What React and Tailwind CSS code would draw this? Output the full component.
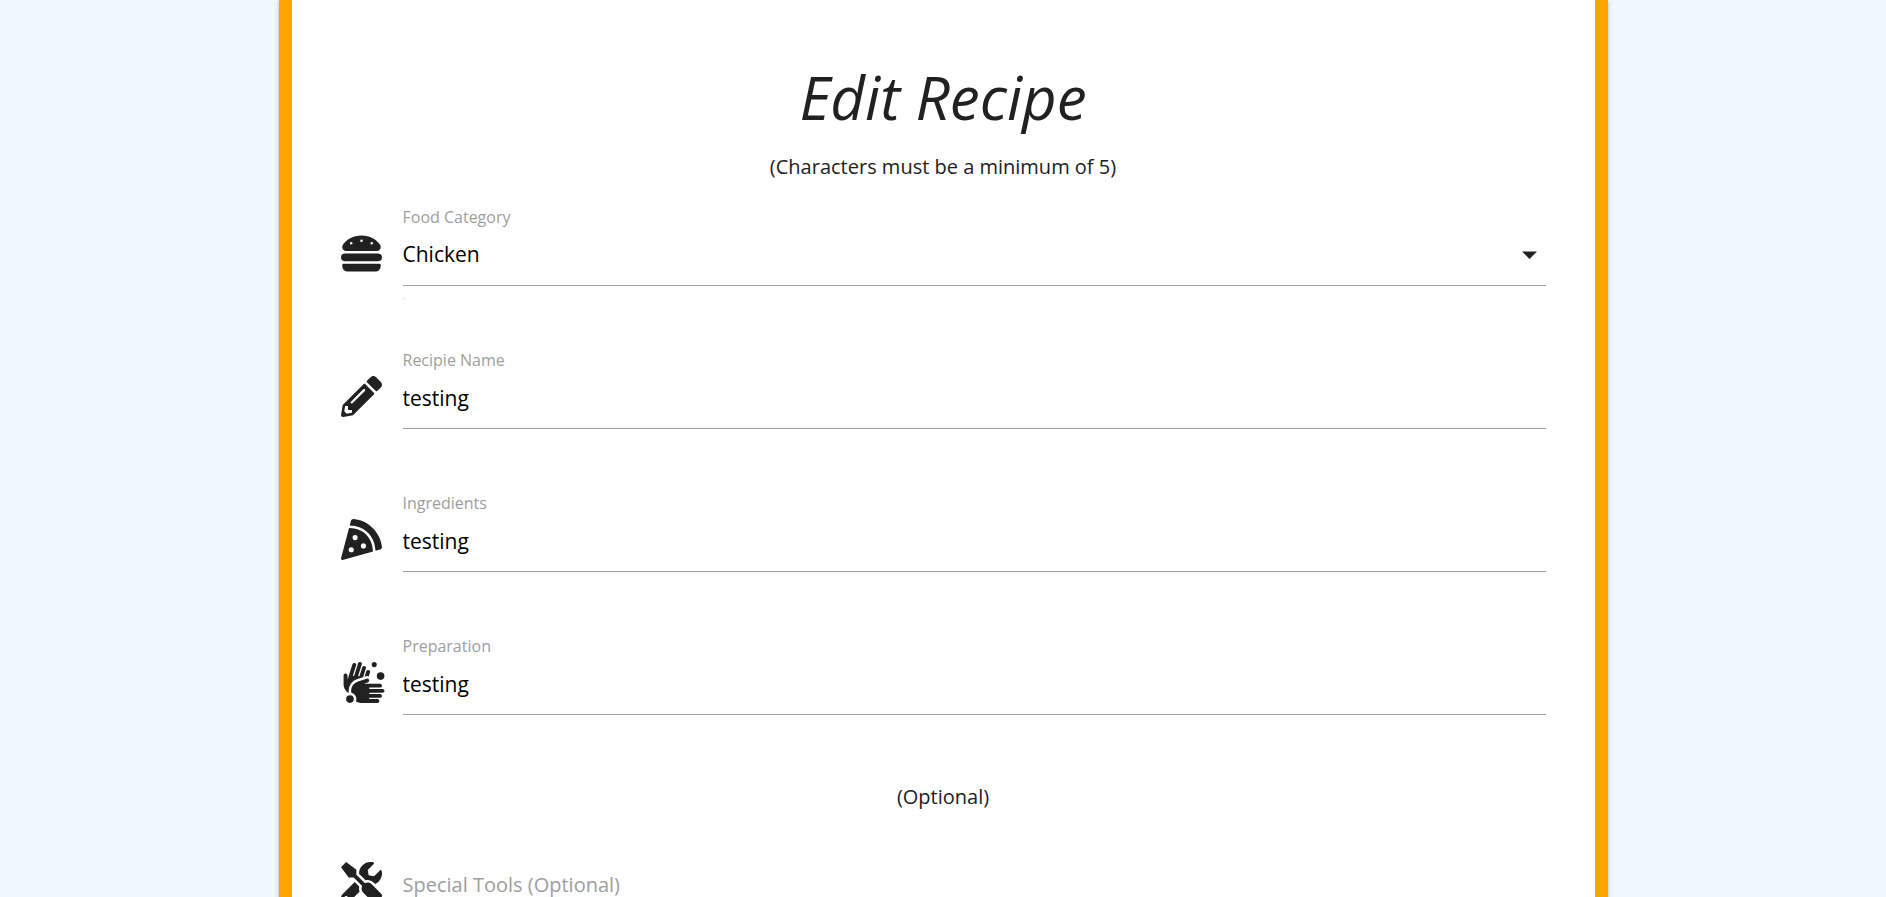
import { FaHamburger, FaPencilAlt, FaPizzaSlice, FaHandsWash, FaTools } from "react-icons/fa";

const controlClass =
  "block h-[58px] w-full appearance-none rounded-none border-b border-[#9e9e9e] bg-transparent pb-[3px] text-black outline-none placeholder:text-[#9e9e9e] placeholder:opacity-100 focus:border-[#26a69a]";

function Field({ icon, id, label, children }) {
  return (
    <div className="mb-[63px] flex items-start">
      <div className="mt-[27px] w-[62px] shrink-0" aria-hidden="true">
        {icon}
      </div>
      <div className="min-w-0 grow">
        <label htmlFor={id} className="block h-[22px] text-[16px] leading-[22px] text-[#9e9e9e]">
          {label}
        </label>
        {children}
      </div>
    </div>
  );
}

export default function App() {
  return (
    <div className="h-screen overflow-hidden bg-[#f0f8ff] font-['Open_Sans',sans-serif] text-[#212121]">
      <main className="mx-auto min-h-full w-full max-w-[1329px] border-x-[13px] border-[orange] bg-white px-[49px] pt-[67px] shadow-[0_2px_2px_0_rgba(0,0,0,0.14),0_3px_1px_-2px_rgba(0,0,0,0.12),0_1px_5px_0_rgba(0,0,0,0.2)]">
        <h1 className="text-center text-[60px] leading-[60px] italic">Edit Recipe</h1>
        <p className="mt-[26px] text-center text-[20px] leading-7">(Characters must be a minimum of 5)</p>

        <form className="mt-[25px]">
          <Field icon={<FaHamburger className="h-[41px] w-[41px]" />} id="category" label="Food Category">
            <div className="relative">
              <select id="category" defaultValue="Chicken" className={`${controlClass} text-[21px]`}>
                <option>Chicken</option>
                <option>Beef</option>
                <option>Seafood</option>
                <option>Vegetarian</option>
              </select>
              <svg className="pointer-events-none absolute top-[23px] right-[9px] h-2 w-[15px]" viewBox="0 0 15 8" aria-hidden="true">
                <path d="M0 .5h15L7.500 8z" fill="#212121" />
              </svg>
              <span className="absolute top-[69px] left-0 size-[3px] rounded-[1px] bg-[#f3f3f3]" />
            </div>
          </Field>
          <Field icon={<FaPencilAlt className="h-[41px] w-[41px]" />} id="name" label="Recipie Name">
            <input id="name" type="text" defaultValue="testing" className={`${controlClass} text-[21px]`} />
          </Field>
          <Field icon={<FaPizzaSlice className="h-[41px] w-[41px]" />} id="ingredients" label="Ingredients">
            <input id="ingredients" type="text" defaultValue="testing" className={`${controlClass} text-[21px]`} />
          </Field>
          <Field icon={<FaHandsWash className="h-[41px] w-[46px]" />} id="preparation" label="Preparation">
            <input id="preparation" type="text" defaultValue="testing" className={`${controlClass} text-[21px]`} />
          </Field>
          <p className="-mt-[58px] pt-[63px] text-center text-[20px] leading-7">(Optional)</p>
          <div className="mt-6">
            <Field icon={<FaTools className="h-[41px] w-[41px]" />} id="tools" label="">
              <input id="tools" type="text" aria-label="Special Tools (Optional)" placeholder="Special Tools (Optional)" className={`${controlClass} text-[20px]`} />
            </Field>
          </div>
        </form>
      </main>
    </div>
  );
}
